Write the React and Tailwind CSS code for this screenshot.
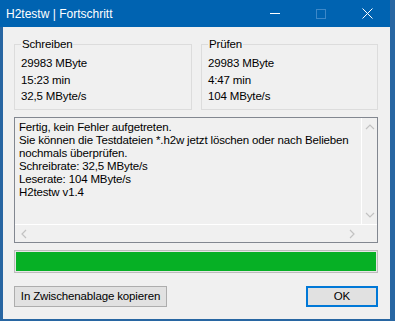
import React from "react";

const font = { fontFamily: '"Liberation Sans", "Noto Sans", sans-serif' };

function Chevron({ dir }) {
  const paths = {
    up: "M1 6 L5 2 L9 6",
    down: "M1 2 L5 6 L9 2",
    left: "M6 1 L2 5 L6 9",
    right: "M2 1 L6 5 L2 9",
  };
  const vert = dir === "up" || dir === "down";
  return (
    <svg width={vert ? 10 : 8} height={vert ? 8 : 10} viewBox={vert ? "0 0 10 8" : "0 0 8 10"}>
      <path d={paths[dir]} fill="none" stroke="#c2c2c2" strokeWidth="1.2" />
    </svg>
  );
}

function Group({ title, lines, className }) {
  return (
    <fieldset className={"border border-[#dcdcdc] px-[6px] pb-[2px] " + className}>
      <legend className="ml-0 px-px leading-[16px]">{title}</legend>
      <div className="flex flex-col pt-[3px]">
        {lines.map((l) => (
          <div key={l} className="leading-[16.5px]">{l}</div>
        ))}
      </div>
    </fieldset>
  );
}

export default function App() {
  return (
    <div className="w-[395px] h-[321px] bg-[#2866a2] text-[11.5px] tracking-[-0.15px] text-black overflow-hidden" style={font}>
      <div className="w-[390px] h-[27px] bg-[#0063b1] flex items-center text-white">
        <div className="pl-[6px] flex-1 text-[12px] tracking-normal">H2testw | Fortschritt</div>
        <div className="w-[46px] h-full flex items-center justify-center">
          <div className="w-[10px] h-px bg-white" />
        </div>
        <div className="w-[46px] h-full flex items-center justify-center">
          <div className="w-[10px] h-[10px] border border-[#3d88c8]" />
        </div>
        <div className="w-[46px] h-full flex items-center justify-center">
          <svg width="11" height="11" viewBox="0 0 11 11">
            <path d="M0.5 0.5 L10.5 10.5 M10.5 0.5 L0.5 10.5" stroke="white" strokeWidth="1" />
          </svg>
        </div>
      </div>
      <div className="ml-[3px] w-[387px] h-[292px] bg-[#f0f0f0] pl-[11px] pr-[12px] pt-[9px] flex flex-col">
        <div className="flex gap-[9px]">
          <Group className="w-[178px] h-[74px]" title="Schreiben" lines={["29983 MByte", "15:23 min", "32,5 MByte/s"]} />
          <Group className="w-[177px] h-[74px]" title="Prüfen" lines={["29983 MByte", "4:47 min", "104 MByte/s"]} />
        </div>
        <div className="mt-[7px] h-[126px] border border-[#828790] flex flex-col">
          <div className="flex flex-1 min-h-0">
            <div className="flex-1 pl-[4px] pt-[3px] leading-[13px] whitespace-pre overflow-hidden">
              {"Fertig, kein Fehler aufgetreten.\nSie können die Testdateien *.h2w jetzt löschen oder nach Belieben\nnochmals überprüfen.\nSchreibrate: 32,5 MByte/s\nLeserate: 104 MByte/s\nH2testw v1.4"}
            </div>
            <div className="w-[16px] border-l border-white flex flex-col items-center justify-between py-[5px]">
              <Chevron dir="up" />
              <Chevron dir="down" />
            </div>
          </div>
          <div className="h-[18px] flex border-t border-white">
            <div className="flex-1 flex items-center justify-between px-[5px]">
              <Chevron dir="left" />
              <Chevron dir="right" />
            </div>
            <div className="w-[16px]" />
          </div>
        </div>
        <div className="mt-[7px] h-[23px] border border-[#bcbcbc] bg-[#e6e6e6] p-px">
          <div className="h-full w-full bg-[#06b025]" />
        </div>
        <div className="mt-[13px] flex justify-between">
          <button className="w-[153px] h-[21px] bg-[#e1e1e1] border border-[#adadad] flex items-center justify-center leading-none whitespace-nowrap">
            In Zwischenablage kopieren
          </button>
          <button className="w-[72px] h-[21px] bg-[#e1e1e1] border-2 border-[#0078d7] flex items-center justify-center leading-none">
            OK
          </button>
        </div>
      </div>
    </div>
  );
}
